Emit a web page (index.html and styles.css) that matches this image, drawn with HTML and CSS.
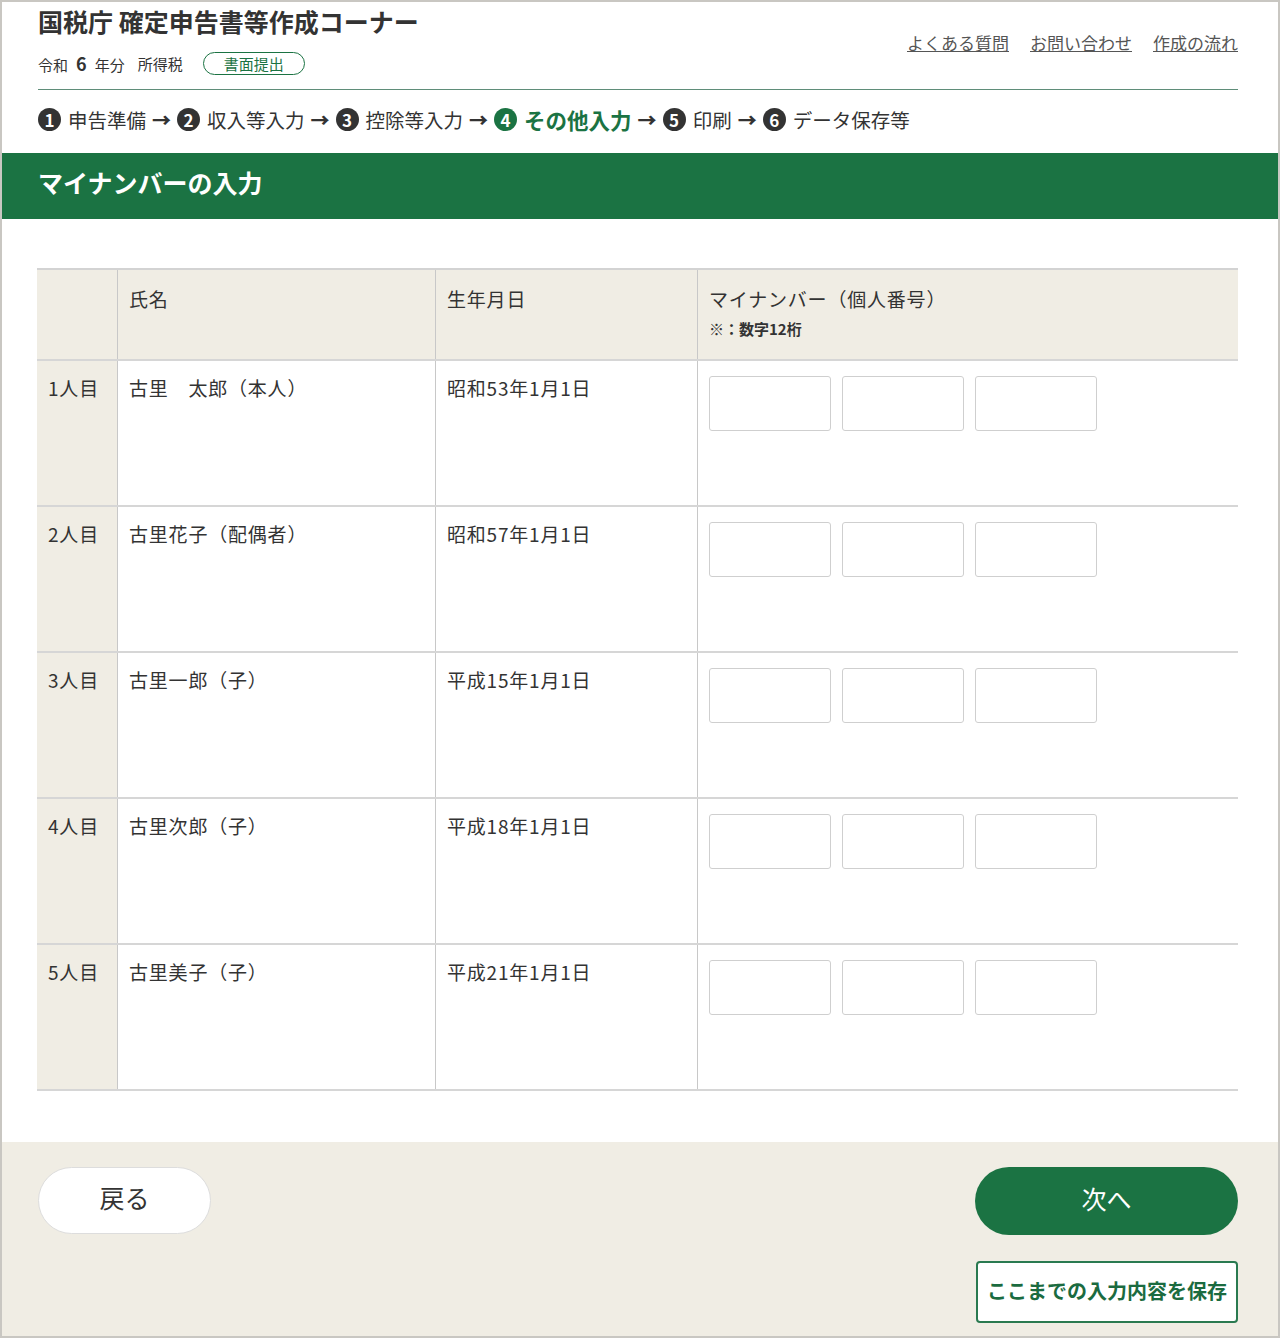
FILE: index.html
```html
<!DOCTYPE html>
<html lang="ja">
<head>
    <meta charset="UTF-8">
    <title>マイナンバーの入力</title>
    <link rel="stylesheet" href="styles.css">
</head>
<body>
<div class="page">

    <!-- Header -->
    <div class="header">
        <div class="brand">
            <h1>国税庁 確定申告書等作成コーナー</h1>
            <div class="sub">
                <span>令和<b class="year">6</b>年分</span>
                <span>所得税</span>
                <span class="pill">書面提出</span>
            </div>
        </div>
        <div class="links">
            <a href="#">よくある質問</a>
            <a href="#">お問い合わせ</a>
            <a href="#">作成の流れ</a>
        </div>
    </div>
    <div class="rule"></div>

    <!-- Steps -->
    <div class="steps">
        <span class="num">1</span><span>申告準備</span><span class="arrow">→</span>
        <span class="num">2</span><span>収入等入力</span><span class="arrow">→</span>
        <span class="num">3</span><span>控除等入力</span><span class="arrow">→</span>
        <span class="num active">4</span><span class="current">その他入力</span><span class="arrow">→</span>
        <span class="num">5</span><span>印刷</span><span class="arrow">→</span>
        <span class="num">6</span><span>データ保存等</span>
    </div>

    <div class="band">マイナンバーの入力</div>

    <!-- Table -->
    <table class="persons">
        <thead>
            <tr>
                <th class="idx"></th>
                <th class="name">氏名</th>
                <th class="birth">生年月日</th>
                <th>マイナンバー（個人番号）<div class="note">※：数字12桁</div></th>
            </tr>
        </thead>
        <tbody>
            <tr>
                <td class="idx">1人目</td>
                <td>古里　太郎（本人）</td>
                <td>昭和53年1月1日</td>
                <td><div class="boxes"><input type="text"><input type="text"><input type="text"></div></td>
            </tr>
            <tr>
                <td class="idx">2人目</td>
                <td>古里花子（配偶者）</td>
                <td>昭和57年1月1日</td>
                <td><div class="boxes"><input type="text"><input type="text"><input type="text"></div></td>
            </tr>
            <tr>
                <td class="idx">3人目</td>
                <td>古里一郎（子）</td>
                <td>平成15年1月1日</td>
                <td><div class="boxes"><input type="text"><input type="text"><input type="text"></div></td>
            </tr>
            <tr>
                <td class="idx">4人目</td>
                <td>古里次郎（子）</td>
                <td>平成18年1月1日</td>
                <td><div class="boxes"><input type="text"><input type="text"><input type="text"></div></td>
            </tr>
            <tr>
                <td class="idx">5人目</td>
                <td>古里美子（子）</td>
                <td>平成21年1月1日</td>
                <td><div class="boxes"><input type="text"><input type="text"><input type="text"></div></td>
            </tr>
        </tbody>
    </table>

    <!-- Footer buttons -->
    <div class="footer">
        <button class="back">戻る</button>
        <div class="right">
            <button class="next">次へ</button>
            <button class="save">ここまでの入力内容を保存</button>
        </div>
    </div>

</div>
</body>
</html>
```

FILE: styles.css
```css
body {
    margin: 0;
    font-family: "Noto Sans CJK JP", "Noto Sans", sans-serif;
    color: #333;
}
.page {
    width: 1280px;
    height: 1338px;
    box-sizing: border-box;
    border: 2px solid #c9c7c2;
    background-color: #fff;
    display: flex;
    flex-direction: column;
}
.header {
    display: flex;
    justify-content: space-between;
    padding: 4px 40px 0 36px;
}
.brand h1 {
    margin: 0;
    font-size: 25px;
    line-height: 30px;
    font-weight: bold;
    color: #333;
}
.sub {
    display: flex;
    align-items: center;
    gap: 13px;
    margin-top: 14px;
    height: 26px;
    font-size: 15px;
}
.year {
    font-size: 18px;
    margin: 0 8px;
}
.pill {
    margin-left: 7px;
    border: 1px solid #1b7343;
    color: #1b7343;
    border-radius: 12px;
    padding: 0 20px;
    font-size: 15px;
    line-height: 21px;
}
.links {
    display: flex;
    gap: 21px;
    margin-top: 25px;
}
.links a {
    color: #555;
    font-size: 17px;
    line-height: 24px;
}
.rule {
    margin: 13px 40px 0 36px;
    border-top: 1px solid #5f8d79;
}
.steps {
    display: flex;
    align-items: center;
    gap: 5px;
    margin: 14px 0 19px 36px;
    height: 30px;
    font-size: 19.5px;
    color: #333;
}
.num {
    display: inline-flex;
    align-items: center;
    justify-content: center;
    width: 23px;
    height: 23px;
    border-radius: 50%;
    background-color: #333;
    color: #fff;
    font-size: 17px;
    font-weight: bold;
    margin-right: 2px;
}
.num.active {
    background-color: #1b7343;
}
.current {
    color: #1b7343;
    font-weight: bold;
    font-size: 21.5px;
}
.arrow {
    font-weight: 900;
    font-size: 19px;
    margin: 0 1px;
}
.band {
    background-color: #1b7343;
    color: #fff;
    height: 66px;
    line-height: 58px;
    padding-left: 36px;
    font-size: 25px;
    font-weight: bold;
}
.persons {
    border-collapse: collapse;
    margin: 49px 40px 0 35px;
    width: 1201px;
    font-size: 19px;
    letter-spacing: 0.8px;
}
.persons th,
.persons td {
    text-align: left;
    vertical-align: top;
    border-left: 1px solid #c8c8c8;
    border-bottom: 2px solid #d6d6d6;
    padding: 13px 10px 0 11px;
    font-weight: normal;
}
.persons th:first-child,
.persons td:first-child {
    border-left: none;
}
.persons thead th {
    background-color: #f0ede4;
    border-top: 2px solid #d3d3d3;
    padding-top: 15px;
    height: 74px;
}
.persons .idx {
    width: 59px;
    background-color: #f0ede4;
}
.persons th.name {
    width: 296px;
}
.persons th.birth {
    width: 240px;
}
.persons tbody td {
    height: 131px;
}
.note {
    font-size: 15px;
    margin-top: 6px;
    font-weight: bold;
    letter-spacing: 0;
}
.boxes {
    display: flex;
    gap: 11px;
    margin-top: 2px;
}
.boxes input {
    width: 122px;
    height: 55px;
    box-sizing: border-box;
    border: 1px solid #cfcfcf;
    border-radius: 3px;
    background-color: #fff;
}
.footer {
    flex: 1;
    margin-top: 51px;
    background-color: #f0ede4;
    display: flex;
    justify-content: space-between;
    align-items: flex-start;
    padding: 25px 40px 0 36px;
}
button {
    font-family: inherit;
    cursor: pointer;
}
.back {
    width: 173px;
    height: 67px;
    padding-bottom: 8px;
    border-radius: 34px;
    border: 1px solid #ddd;
    background-color: #fff;
    color: #333;
    font-size: 25px;
}
.right {
    display: flex;
    flex-direction: column;
    align-items: flex-end;
    gap: 26px;
}
.next {
    width: 263px;
    height: 68px;
    padding-bottom: 8px;
    border-radius: 34px;
    border: none;
    background-color: #1b7343;
    color: #fff;
    font-size: 25px;
}
.save {
    width: 262px;
    height: 62px;
    padding-bottom: 5px;
    border: 2px solid #2a7a50;
    border-radius: 4px;
    background-color: #fff;
    color: #1b6b40;
    font-size: 20px;
    font-weight: bold;
}
```
